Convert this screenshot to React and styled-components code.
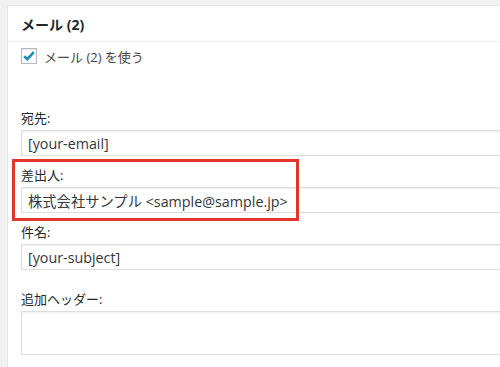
import styled, { createGlobalStyle } from "styled-components";

const GlobalStyle = createGlobalStyle`
  html, body {
    margin: 0;
    padding: 0;
    background: #f1f1f1;
    overflow: hidden;
  }
  body {
    font-family: "Open Sans", "Noto Sans CJK JP", sans-serif;
    color: #23282d;
  }
`;

const Panel = styled.section`
  box-sizing: border-box;
  margin: 5px 0 0 7px;
  height: calc(100vh - 5px);
  background: #fff;
  border: 1px solid #e5e5e5;
  border-right: none;
  border-bottom: none;
  overflow: hidden;
`;

const PanelHeader = styled.h3`
  margin: 0;
  height: 35px;
  padding: 0 13px;
  display: flex;
  align-items: center;
  border-bottom: 1px solid #eee;
  font-size: 14px;
  font-weight: 700;
  color: #23282d;
`;

const PanelBody = styled.div`
  padding: 6px 0 0 13px;
`;

const CheckRow = styled.label`
  display: flex;
  align-items: center;
  gap: 7px;
  height: 16px;
  font-size: 13px;
  color: #444;
`;

const CheckBox = styled.span`
  box-sizing: border-box;
  width: 16px;
  height: 16px;
  border: 1px solid #b4b9be;
  background: #fff;
  box-shadow: inset 0 1px 2px rgba(0, 0, 0, 0.1);
  display: flex;
  align-items: center;
  justify-content: center;
`;

const Field = styled.div`
  position: relative;
  margin-top: ${({ $gap }) => $gap}px;
`;

const Label = styled.div`
  font-size: 13px;
  line-height: 20px;
  margin-bottom: 2px;
  color: #23282d;
`;

const TextInput = styled.div`
  box-sizing: border-box;
  height: 26px;
  width: 100%;
  padding: 0 6px;
  display: flex;
  align-items: center;
  border: 1px solid #ddd;
  border-right: none;
  box-shadow: inset 0 1px 2px rgba(0, 0, 0, 0.07);
  font-size: 14.3px;
  color: #32373c;
  white-space: nowrap;
`;

const TextArea = styled.div`
  box-sizing: border-box;
  height: 44px;
  width: 100%;
  border: 1px solid #ddd;
  border-right: none;
  box-shadow: inset 0 1px 2px rgba(0, 0, 0, 0.07);
`;

const Highlight = styled.div`
  position: absolute;
  box-sizing: border-box;
  top: -6px;
  left: -9px;
  width: 287px;
  height: 62px;
  border: 3px solid #e1362c;
  pointer-events: none;
`;

const fields = [
  { label: "宛先:", value: "[your-email]", gap: 44 },
  { label: "差出人:", value: "株式会社サンプル <sample@sample.jp>", gap: 9, marked: true },
  { label: "件名:", value: "[your-subject]", gap: 9 },
];

export default function App() {
  return (
    <>
      <GlobalStyle />
      <Panel>
        <PanelHeader>メール (2)</PanelHeader>
        <PanelBody>
          <CheckRow>
            <CheckBox>
              <svg width="14" height="14" viewBox="0 0 14 14">
                <path d="M2.2 7.2 L5.4 10.2 L11.8 3.2" fill="none" stroke="#1e8cbe" strokeWidth="2.6" />
              </svg>
            </CheckBox>
            メール (2) を使う
          </CheckRow>
          {fields.map((f) => (
            <Field key={f.label} $gap={f.gap}>
              <Label>{f.label}</Label>
              <TextInput>{f.value}</TextInput>
              {f.marked && <Highlight />}
            </Field>
          ))}
          <Field $gap={19}>
            <Label>追加ヘッダー:</Label>
            <TextArea />
          </Field>
        </PanelBody>
      </Panel>
    </>
  );
}
